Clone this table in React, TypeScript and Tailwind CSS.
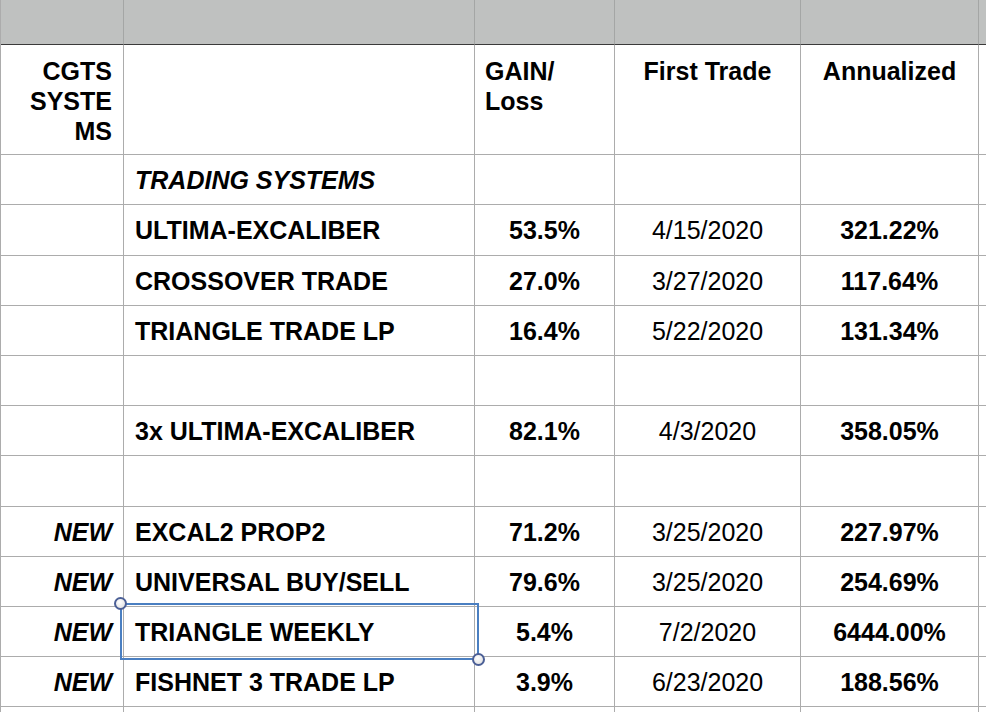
import React from "react";

type Row = {
  h: number;
  a?: string;
  b?: string;
  bItalic?: boolean;
  c?: string;
  d?: string;
  e?: string;
};

const rows: Row[] = [
  { h: 50, b: "TRADING SYSTEMS", bItalic: true },
  { h: 51, b: "ULTIMA-EXCALIBER", c: "53.5%", d: "4/15/2020", e: "321.22%" },
  { h: 50, b: "CROSSOVER TRADE", c: "27.0%", d: "3/27/2020", e: "117.64%" },
  { h: 50, b: "TRIANGLE TRADE LP", c: "16.4%", d: "5/22/2020", e: "131.34%" },
  { h: 50 },
  { h: 50, b: "3x ULTIMA-EXCALIBER", c: "82.1%", d: "4/3/2020", e: "358.05%" },
  { h: 51 },
  { h: 50, a: "NEW", b: "EXCAL2 PROP2", c: "71.2%", d: "3/25/2020", e: "227.97%" },
  { h: 50, a: "NEW", b: "UNIVERSAL BUY/SELL", c: "79.6%", d: "3/25/2020", e: "254.69%" },
  { h: 50, a: "NEW", b: "TRIANGLE WEEKLY", c: "5.4%", d: "7/2/2020", e: "6444.00%" },
  { h: 50, a: "NEW", b: "FISHNET 3 TRADE LP", c: "3.9%", d: "6/23/2020", e: "188.56%" },
  { h: 50 },
];

const cell = "border-r border-b border-[#acacac] flex items-center overflow-hidden whitespace-nowrap";

export default function App() {
  return (
    <div
      className="relative w-[986px] h-[712px] overflow-hidden bg-white text-black"
      style={{ fontFamily: '"Liberation Sans", Arial, Helvetica, sans-serif' }}
    >
      <div className="grid grid-cols-[123px_351px_140px_186px_178px_120px] border-l border-[#acacac] text-[25px] leading-[30px]">
        {/* gray header strip */}
        <div className="h-[45px] bg-[#bfc1c0] border-r border-[#a4a6a5] border-b border-b-[#3a3a3a]" />
        <div className="h-[45px] bg-[#bfc1c0] border-r border-[#a4a6a5] border-b border-b-[#3a3a3a]" />
        <div className="h-[45px] bg-[#bfc1c0] border-r border-[#a4a6a5] border-b border-b-[#3a3a3a]" />
        <div className="h-[45px] bg-[#bfc1c0] border-r border-[#a4a6a5] border-b border-b-[#3a3a3a]" />
        <div className="h-[45px] bg-[#bfc1c0] border-r border-[#a4a6a5] border-b border-b-[#3a3a3a]" />
        <div className="h-[45px] bg-[#bfc1c0] border-r border-[#a4a6a5] border-b border-b-[#3a3a3a]" />

        {/* column header row */}
        <div className="h-[110px] border-r border-b border-[#acacac] pt-[11px] pr-[11px] text-right font-bold">
          CGTS
          <br />
          SYSTE
          <br />
          MS
        </div>
        <div className="h-[110px] border-r border-b border-[#acacac]" />
        <div className="h-[110px] border-r border-b border-[#acacac] pt-[11px] pl-[10px] font-bold">
          GAIN/
          <br />
          Loss
        </div>
        <div className="h-[110px] border-r border-b border-[#acacac] pt-[11px] text-center font-bold">First Trade</div>
        <div className="h-[110px] border-r border-b border-[#acacac] pt-[11px] text-center font-bold">Annualized</div>
        <div className="h-[110px] border-r border-b border-[#acacac]" />

        {rows.map((r, i) => (
          <React.Fragment key={i}>
            <div className={`${cell} justify-end pr-[11px] font-bold italic`} style={{ height: r.h }}>
              {r.a}
            </div>
            <div
              className={`${cell} pl-[11px] font-bold ${r.bItalic ? "italic" : ""}`}
              style={{ height: r.h }}
            >
              {r.b}
            </div>
            <div className={`${cell} justify-center font-bold`} style={{ height: r.h }}>
              {r.c}
            </div>
            <div className={`${cell} justify-center`} style={{ height: r.h }}>
              {r.d}
            </div>
            <div className={`${cell} justify-center font-bold`} style={{ height: r.h }}>
              {r.e}
            </div>
            <div className={cell} style={{ height: r.h }} />
          </React.Fragment>
        ))}
      </div>

      {/* selection overlay */}
      <div className="absolute left-[120px] top-[603px] w-[359px] h-[57px] border-2 border-[#4a7fc1] pointer-events-none" />
      <div className="absolute left-[114px] top-[597px] w-[13px] h-[13px] rounded-full border-2 border-[#4b5f96] bg-[radial-gradient(circle_at_40%_35%,#ffffff,#dcdcdc)]" />
      <div className="absolute left-[472px] top-[653px] w-[13px] h-[13px] rounded-full border-2 border-[#4b5f96] bg-[radial-gradient(circle_at_40%_35%,#ffffff,#dcdcdc)]" />
    </div>
  );
}
